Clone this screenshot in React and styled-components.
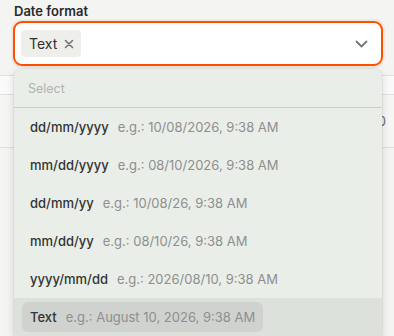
import React from "react";
import styled, { createGlobalStyle } from "styled-components";

const Global = createGlobalStyle`
  html, body { margin: 0; padding: 0; }
  body {
    background: #f4f4f3;
    font-family: Inter, "Noto Sans", sans-serif;
    -webkit-font-smoothing: antialiased;
  }
`;

const Page = styled.div`
  position: relative;
  width: 394px;
  height: 336px;
  overflow: hidden;
  background: #f4f4f3;
`;

const Field = styled.div`
  display: flex;
  flex-direction: column;
  gap: 2px;
  padding: 3px 11px 0 13px;
`;

const Label = styled.label`
  font-size: 13px;
  line-height: 16px;
  font-weight: 600;
  color: #2a2a2a;
  padding-left: 1px;
`;

const Input = styled.div`
  display: flex;
  align-items: center;
  height: 45px;
  box-sizing: border-box;
  border: 2px solid #ff5000;
  border-radius: 9px;
  background: #fff;
  padding: 0 13px 0 6px;
  box-shadow: 0 0 0 2px rgba(255, 80, 0, 0.08);
`;

const Chip = styled.span`
  display: inline-flex;
  align-items: center;
  gap: 7px;
  height: 27px;
  padding: 0 7px 0 8px;
  border-radius: 4px;
  background: #eeeeeb;
  color: #2e2e2e;
  font-size: 14px;
`;

const Spacer = styled.div`
  flex: 1;
`;

const Table = styled.div`
  margin-top: 9px;
  display: flex;
  flex-direction: column;
`;

const Row = styled.div`
  height: ${(p) => p.$h}px;
  background: ${(p) => p.$bg};
  border-top: 1px solid #e0e0e0;
  display: flex;
  align-items: center;
  justify-content: flex-end;
  padding-right: 8px;
  font-size: 13px;
  color: #666;
`;

const Rest = styled.div`
  flex: 1;
  background: #fff;
  border-top: 1px solid #e0e0e0;
  height: 200px;
`;

const Menu = styled.div`
  position: absolute;
  top: 69px;
  left: 14px;
  width: 368px;
  height: 272px;
  background: #e9eee9;
  border-radius: 8px;
  box-shadow: 0 2px 10px rgba(0, 0, 0, 0.14), 0 0 0 1px rgba(0, 0, 0, 0.04);
  overflow: hidden;
  display: flex;
  flex-direction: column;
`;

const Placeholder = styled.div`
  height: 38px;
  display: flex;
  align-items: center;
  padding-left: 14px;
  font-size: 12.5px;
  color: #b1b3b1;
  border-bottom: 1px solid #c9ccc9;
`;

const ItemRow = styled.div`
  height: 38px;
  box-sizing: border-box;
  padding: 4px 8px;
  display: flex;
  align-items: center;
  background: ${(p) => (p.$active ? "#dde1dc" : "transparent")};
`;

const Item = styled.div`
  display: inline-flex;
  align-items: center;
  gap: 9px;
  height: 30px;
  padding: 0 8px;
  border-radius: 6px;
  background: ${(p) => (p.$active ? "#cfd2ce" : "transparent")};
  font-size: 13px;
  white-space: nowrap;
`;

const Fmt = styled.span`
  font-weight: 500;
  color: #333;
`;

const Example = styled.span`
  color: #8e8f8e;
`;

const XIcon = () => (
  <svg width="10" height="10" viewBox="0 0 10 10" fill="none">
    <path d="M1.5 1.5l7 7M8.5 1.5l-7 7" stroke="#707070" strokeWidth="1.5" strokeLinecap="round" />
  </svg>
);

const Chevron = () => (
  <svg width="13" height="8" viewBox="0 0 13 8" fill="none">
    <path d="M1.5 1.5l5 5 5-5" stroke="#767676" strokeWidth="1.8" strokeLinecap="round" strokeLinejoin="round" />
  </svg>
);

const items = [
  ["dd/mm/yyyy", "e.g.: 10/08/2026, 9:38 AM"],
  ["mm/dd/yyyy", "e.g.: 08/10/2026, 9:38 AM"],
  ["dd/mm/yy", "e.g.: 10/08/26, 9:38 AM"],
  ["mm/dd/yy", "e.g.: 08/10/26, 9:38 AM"],
  ["yyyy/mm/dd", "e.g.: 2026/08/10, 9:38 AM"],
  ["Text", "e.g.: August 10, 2026, 9:38 AM"],
];

export default function App() {
  return (
    <Page>
      <Global />
      <Field>
        <Label>Date format</Label>
        <Input>
          <Chip>
            Text
            <XIcon />
          </Chip>
          <Spacer />
          <Chevron />
        </Input>
      </Field>
      <Table>
        <Row $h={18} $bg="#fafafa" />
        <Row $h={52} $bg="#f6f6f5">0</Row>
        <Rest />
      </Table>
      <Menu>
        <Placeholder>Select</Placeholder>
        {items.map(([f, e], i) => {
          const active = i === items.length - 1;
          return (
            <ItemRow key={f} $active={active}>
              <Item $active={active}>
                <Fmt>{f}</Fmt>
                <Example>{e}</Example>
              </Item>
            </ItemRow>
          );
        })}
      </Menu>
    </Page>
  );
}
